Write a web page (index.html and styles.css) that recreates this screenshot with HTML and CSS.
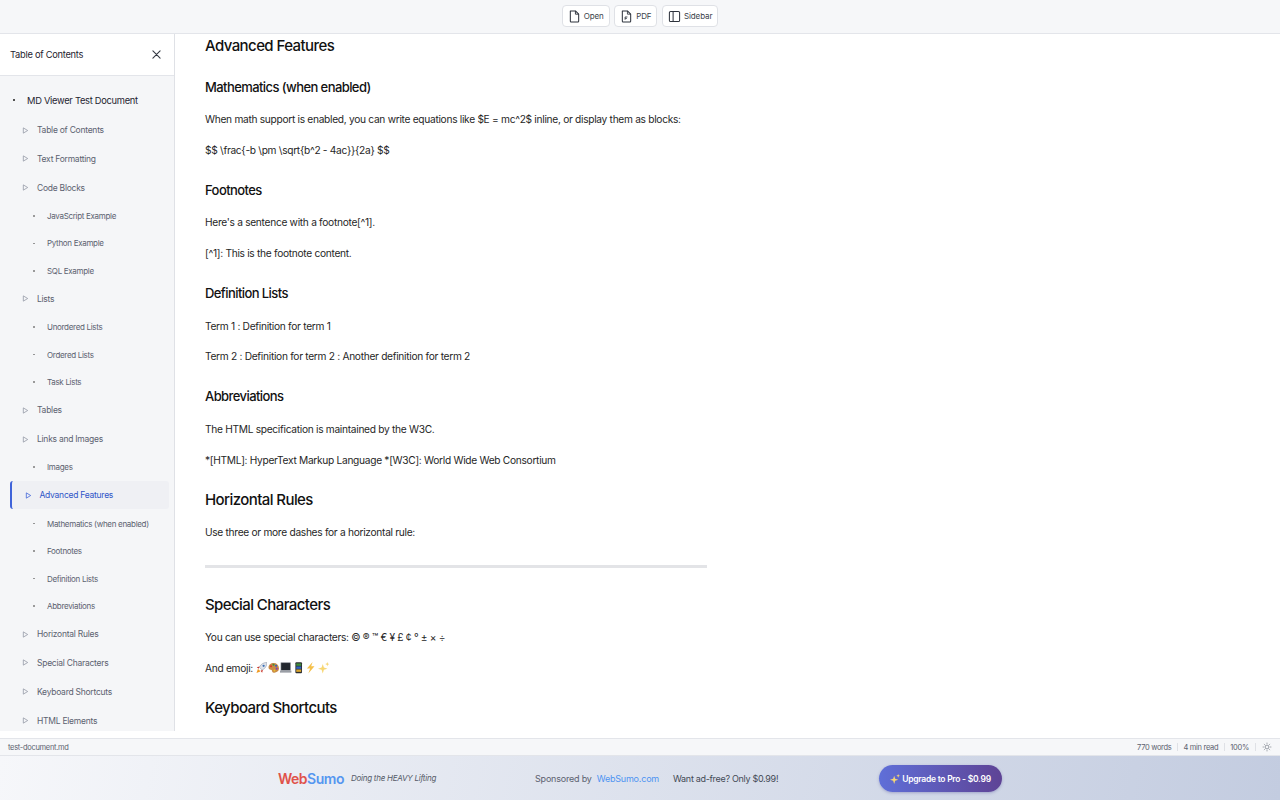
FILE: index.html
```html
<!DOCTYPE html>
<html lang="en">
<head>
<meta charset="utf-8">
<title>MD Viewer</title>
<link rel="stylesheet" href="styles.css">
</head>
<body>
<svg class="defs" width="0" height="0" aria-hidden="true">
  <symbol id="tri" viewBox="0 0 8 8"><path d="M1.5 1 L6.5 4 L1.5 7 Z" fill="none" stroke="currentColor" stroke-width="0.9" stroke-linejoin="round"/></symbol>
</svg>
<header class="toolbar">
  <button class="tool-btn">
    <svg class="tool-icon" viewBox="0 0 14 14"><path d="M2.500 1h5.500l3.500 3.500v7.700a.8.8 0 0 1-.8.8H3.300a.8.8 0 0 1-.8-.8V1z" fill="none" stroke="currentColor" stroke-width="1.100" stroke-linejoin="round"/><path d="M8 1v3.500h3.500" fill="none" stroke="currentColor" stroke-width="1"/></svg>
    Open</button>
  <button class="tool-btn">
    <svg class="tool-icon" viewBox="0 0 14 14"><path d="M2.500 1h5.500l3.500 3.500v7.700a.8.8 0 0 1-.8.8H3.300a.8.8 0 0 1-.8-.8V1z" fill="none" stroke="currentColor" stroke-width="1.100" stroke-linejoin="round"/><path d="M8 1v3.500h3.500M5.500 10.500V7.500h2.500M5.500 9h2" fill="none" stroke="currentColor" stroke-width=".9"/></svg>
    PDF</button>
  <button class="tool-btn">
    <svg class="tool-icon" viewBox="0 0 14 14"><rect x="1.500" y="1.500" width="11" height="11" rx="1.300" fill="none" stroke="currentColor" stroke-width="1.100"/><path d="M5.500 1.500v11" stroke="currentColor" stroke-width="1.100"/></svg>
    Sidebar</button>
</header>

<div class="workspace">
  <aside class="sidebar">
    <div class="side-head">
      <span class="side-title">Table of Contents</span>
      <svg class="close" viewBox="0 0 10 10"><path d="M1 1l8 8M9 1L1 9" stroke="currentColor" stroke-width="1.200" stroke-linecap="round"/></svg>
    </div>
    <nav class="toc">
      <a class="toc-item lvl1"><span class="dot"></span>MD Viewer Test Document</a>
      <a class="toc-item lvl2"><svg class="tri"><use href="#tri"/></svg>Table of Contents</a>
      <a class="toc-item lvl2"><svg class="tri"><use href="#tri"/></svg>Text Formatting</a>
      <a class="toc-item lvl2"><svg class="tri"><use href="#tri"/></svg>Code Blocks</a>
      <a class="toc-item lvl3"><span class="dot"></span>JavaScript Example</a>
      <a class="toc-item lvl3"><span class="dot"></span>Python Example</a>
      <a class="toc-item lvl3"><span class="dot"></span>SQL Example</a>
      <a class="toc-item lvl2"><svg class="tri"><use href="#tri"/></svg>Lists</a>
      <a class="toc-item lvl3"><span class="dot"></span>Unordered Lists</a>
      <a class="toc-item lvl3"><span class="dot"></span>Ordered Lists</a>
      <a class="toc-item lvl3"><span class="dot"></span>Task Lists</a>
      <a class="toc-item lvl2"><svg class="tri"><use href="#tri"/></svg>Tables</a>
      <a class="toc-item lvl2"><svg class="tri"><use href="#tri"/></svg>Links and Images</a>
      <a class="toc-item lvl3"><span class="dot"></span>Images</a>
      <a class="toc-item lvl2 active"><svg class="tri"><use href="#tri"/></svg>Advanced Features</a>
      <a class="toc-item lvl3"><span class="dot"></span>Mathematics (when enabled)</a>
      <a class="toc-item lvl3"><span class="dot"></span>Footnotes</a>
      <a class="toc-item lvl3"><span class="dot"></span>Definition Lists</a>
      <a class="toc-item lvl3"><span class="dot"></span>Abbreviations</a>
      <a class="toc-item lvl2"><svg class="tri"><use href="#tri"/></svg>Horizontal Rules</a>
      <a class="toc-item lvl2"><svg class="tri"><use href="#tri"/></svg>Special Characters</a>
      <a class="toc-item lvl2"><svg class="tri"><use href="#tri"/></svg>Keyboard Shortcuts</a>
      <a class="toc-item lvl2"><svg class="tri"><use href="#tri"/></svg>HTML Elements</a>
    </nav>
  </aside>
  <main class="doc">
    <h2 class="h-first">Advanced Features</h2>
    <h3>Mathematics (when enabled)</h3>
    <p>When math support is enabled, you can write equations like $E = mc^2$ inline, or display them as blocks:</p>
    <p>$$ \frac{-b \pm \sqrt{b^2 - 4ac}}{2a} $$</p>
    <h3>Footnotes</h3>
    <p>Here's a sentence with a footnote[^1].</p>
    <p>[^1]: This is the footnote content.</p>
    <h3>Definition Lists</h3>
    <p>Term 1 : Definition for term 1</p>
    <p>Term 2 : Definition for term 2 : Another definition for term 2</p>
    <h3>Abbreviations</h3>
    <p>The HTML specification is maintained by the W3C.</p>
    <p>*[HTML]: HyperText Markup Language *[W3C]: World Wide Web Consortium</p>
    <h2>Horizontal Rules</h2>
    <p>Use three or more dashes for a horizontal rule:</p>
    <hr class="rule">
    <h2>Special Characters</h2>
    <p>You can use special characters: © ® ™ € ¥ £ ¢ ° ± × ÷</p>
    <p>And emoji:
      <span class="emojis">
      <svg class="emoji" viewBox="0 0 12 12"><path d="M11.500 .5C8 .5 5 2.200 3.500 5.500L6.500 8.500C9.800 7 11.500 4 11.500 .5z" fill="#dfe3ea" stroke="#7d8699" stroke-width=".5"/><circle cx="8" cy="4" r="1.200" fill="#3b6fb5"/><path d="M3.800 4.800L.8 5.500 2.800 7.200zM7.200 8.200L6.500 11.200 4.800 9.200z" fill="#c9372c"/><path d="M3.500 8.500L.5 11.500l1.500-4zM3.500 8.500L.5 11.500l4-1.500z" fill="#f09a22"/></svg>
      <svg class="emoji" viewBox="0 0 12 12"><path d="M6 1C2.500 1 .2 3.400.6 6.400c.3 1.900 2.200 1.500 3.100 2 .9.600.2 2.500 2.200 2.800 2.900.4 5.900-1.500 5.700-4.800C11.400 3.300 9.300 1 6 1z" fill="#c98a45"/><circle cx="3.200" cy="4.400" r="1.100" fill="#d9352c"/><circle cx="5.800" cy="2.900" r="1.100" fill="#3f8f3a"/><circle cx="8.500" cy="4" r="1.100" fill="#2f63c0"/><circle cx="9.200" cy="7" r="1.100" fill="#8a3fb5"/><circle cx="6.800" cy="8.900" r="1" fill="#e8c32e"/></svg>
      <svg class="emoji" viewBox="0 0 12 12"><rect x="1" y=".8" width="10" height="8" fill="#23272e" stroke="#8b8f96" stroke-width=".6"/><rect x="0" y="9" width="12" height="2.200" fill="#9a9ea5"/></svg>
      <svg class="emoji" viewBox="0 0 12 12"><rect x="2.500" y=".2" width="7" height="11.600" rx="1" fill="#2b2e33"/><rect x="3.400" y="1.500" width="5.200" height="2.500" fill="#3f8f3a"/><rect x="3.400" y="4.700" width="5.200" height="2.500" fill="#2f63c0"/><rect x="3.400" y="7.900" width="5.200" height="2.500" fill="#d8a52e"/></svg>
      <svg class="emoji" viewBox="0 0 12 12"><path d="M8 0L2 6.800h3.400L3.500 12l6.500-7.400H6.500z" fill="#f5c04a"/></svg>
      <svg class="emoji" viewBox="0 0 12 12"><path d="M5 2l1.200 3.800 3.800 1.200-3.800 1.200L5 12 3.800 8.200 0 7l3.800-1.200zM9.800 0l.6 1.600 1.600.6-1.600.6-.6 1.600-.6-1.600-1.600-.6 1.600-.6z" fill="#f7d774"/></svg>
      </span>
    </p>
    <h2>Keyboard Shortcuts</h2>
  </main>
</div>

<footer class="status">
  <span class="file">test-document.md</span>
  <div class="stats">
    <span>770 words</span><i class="sep"></i>
    <span>4 min read</span><i class="sep"></i>
    <span>100%</span><i class="sep"></i>
    <svg class="sun" viewBox="0 0 12 12"><circle cx="6" cy="6" r="2.300" fill="none" stroke="currentColor" stroke-width=".8"/><path d="M6 .8v1.400M6 9.800v1.400M.8 6h1.400M9.800 6h1.400M2.300 2.300l1 1M8.700 8.700l1 1M2.300 9.700l1-1M8.700 3.300l1-1" stroke="currentColor" stroke-width=".8"/></svg>
  </div>
</footer>

<section class="promo">
  <div class="brand">
    <span class="logo"><span class="logo-web">Web</span><span class="logo-sumo">Sumo</span></span>
    <em class="tagline">Doing the HEAVY Lifting</em>
  </div>
  <div class="sponsor">
    <span>Sponsored by</span>
    <a class="sponsor-link">WebSumo.com</a>
  </div>
  <span class="adfree">Want ad-free? Only $0.99!</span>
  <button class="upgrade"><svg class="spark" viewBox="0 0 12 12"><path d="M5 2l1.200 3.800 3.800 1.200-3.800 1.200L5 12 3.800 8.200 0 7l3.800-1.200zM9.800 0l.6 1.600 1.600.6-1.600.6-.6 1.600-.6-1.600-1.600-.6 1.600-.6z" fill="#f7d774"/></svg>Upgrade to Pro - $0.99</button>
</section>
</body>
</html>
```
FILE: styles.css
```css
* { box-sizing: border-box; }
html, body { margin: 0; height: 100%; }
body {
  width: 1280px;
  height: 800px;
  overflow: hidden;
  display: flex;
  flex-direction: column;
  font-family: Inter, "Liberation Sans", sans-serif;
  background: #fff;
  color: #1a1a1a;
}
.defs { position: absolute; }

.toolbar {
  height: 34px;
  flex: none;
  display: flex;
  justify-content: center;
  align-items: center;
  gap: 4.500px;
  background: #f6f7f9;
  border-bottom: 1px solid #e3e5ea;
  padding-bottom: 1px;
}
.tool-btn {
  height: 22px;
  display: flex;
  align-items: center;
  gap: 3px;
  padding: 0 5px;
  background: #fff;
  border: 1px solid #dfe1e6;
  border-radius: 4px;
  font: 400 8px Inter, sans-serif;
  letter-spacing: -.1px;
  color: #3a3f4a;
}
.tool-icon { width: 13px; height: 13px; color: #2d323c; }

.workspace { height: 697px; flex: none; display: flex; overflow: hidden; }

.sidebar {
  width: 175px;
  flex: none;
  background: #f5f6f8;
  border-right: 1px solid #dfe1e6;
  overflow: hidden;
}
.side-head {
  height: 42px;
  background: #fff;
  border-bottom: 1px solid #e3e5ea;
  display: flex;
  align-items: center;
  justify-content: space-between;
  padding: 0 13px 0 10px;
}
.side-title { font-size: 9.300px; font-weight: 400; letter-spacing: -.27px; color: #1f2430; }
.close { width: 9px; height: 9px; color: #333842; }

.toc { padding: 9px 5px 0 10px; }
.toc-item { display: flex; align-items: center; font-size: 8.500px; letter-spacing: -.25px; color: #5c6270; white-space: nowrap; }
.lvl1 { height: 30px; margin-bottom: .7px; padding-left: 3px; font-size: 9.300px; font-weight: 400; letter-spacing: -.27px; color: #1f2430; }
.lvl2 { height: 28.800px; padding-left: 12px; }
.lvl3 { height: 27.500px; padding-left: 23px; font-size: 8px; letter-spacing: -.31px; }
.dot { width: 1.500px; height: 1.500px; border-radius: 50%; background: #555b68; flex: none; }
.lvl1 .dot { margin-right: 12.500px; background: #333; }
.lvl3 .dot { margin-right: 12.500px; background: #888; }
.tri { width: 7px; height: 7px; margin-right: 8px; flex: none; color: #9398a4; }
.active {
  height: 27.800px;
  margin: 0.500px 0;
  padding-left: 13px;
  background: #eff0f4;
  border-left: 2px solid #3f63d9;
  border-radius: 3px;
  color: #2f55c8;
}
.active .tri { color: #3f63d9; margin-right: 7.500px; }

.doc { flex: 1; padding: 0 0 0 30px; overflow: hidden; }
.doc h2 { margin: 0; font-size: 15px; font-weight: 500; letter-spacing: -.58px; line-height: 24px; padding-top: 5.800px; padding-bottom: 12.300px; color: #111; }
.doc h2.h-first { padding-top: 0; padding-bottom: 12px; margin-top: -.5px; }
.doc h3 { margin: 0; font-size: 13px; font-weight: 500; letter-spacing: -.58px; line-height: 20px; padding-top: 7px; padding-bottom: 14.800px; color: #111; }
.doc p { margin: 0; font-size: 10.200px; letter-spacing: -.3px; line-height: 17px; padding: 0 0 13.700px; color: #262626; }
.rule { width: 502px; height: 3px; border: 0; background: #e3e4e7; margin: 9.800px 0 19.200px; }
.emojis { display: inline-flex; gap: 1px; vertical-align: -2px; }
.emoji { width: 11.400px; height: 11.400px; }

.status {
  height: 18px;
  flex: none;
  margin-top: 7px;
  display: flex;
  align-items: center;
  justify-content: space-between;
  padding: 0 8px;
  background: #f6f7f9;
  border-top: 1px solid #e3e5ea;
  border-bottom: 1px solid #e3e5ea;
  font-size: 7.500px;
  letter-spacing: -.3px;
  color: #5c6270;
}
.stats { display: flex; align-items: center; gap: 5.500px; }
.sep { width: 1px; height: 8px; background: #dfe1e6; }
.sun { width: 10px; height: 10px; margin-left: 1px; color: #6a707c; }

.promo {
  flex: 1;
  display: flex;
  align-items: center;
  padding-left: 278px;
  background: linear-gradient(100deg, #f6f7fa 0%, #c3cce0 100%);
}
.brand { display: flex; align-items: center; gap: 7px; width: 257px; flex: none; }
.logo { font-size: 14px; font-weight: 600; letter-spacing: -.5px; }
.logo-web { color: #e0524a; }
.logo-sumo { color: #5596f0; }
.tagline { font-size: 8px; letter-spacing: -.25px; color: #555b68; }
.sponsor { display: flex; gap: 5px; font-size: 9px; letter-spacing: -.2px; color: #5c6270; width: 138px; flex: none; }
.sponsor-link { color: #4f94f2; }
.adfree { font-size: 9px; letter-spacing: -.3px; color: #444a56; width: 206px; flex: none; }
.upgrade {
  width: 123px;
  height: 27px;
  flex: none;
  display: flex;
  align-items: center;
  justify-content: center;
  gap: 2px;
  border: 0;
  border-radius: 14px;
  padding: 1px 0 0;
  white-space: nowrap;
  background: linear-gradient(90deg, #5f6fd8, #5e4395);
  box-shadow: 0 1px 3px rgba(70, 70, 150, .35);
  font: 600 8.500px Inter, sans-serif;
  letter-spacing: -.25px;
  color: #fff;
}
.spark { width: 10px; height: 10px; }
```
